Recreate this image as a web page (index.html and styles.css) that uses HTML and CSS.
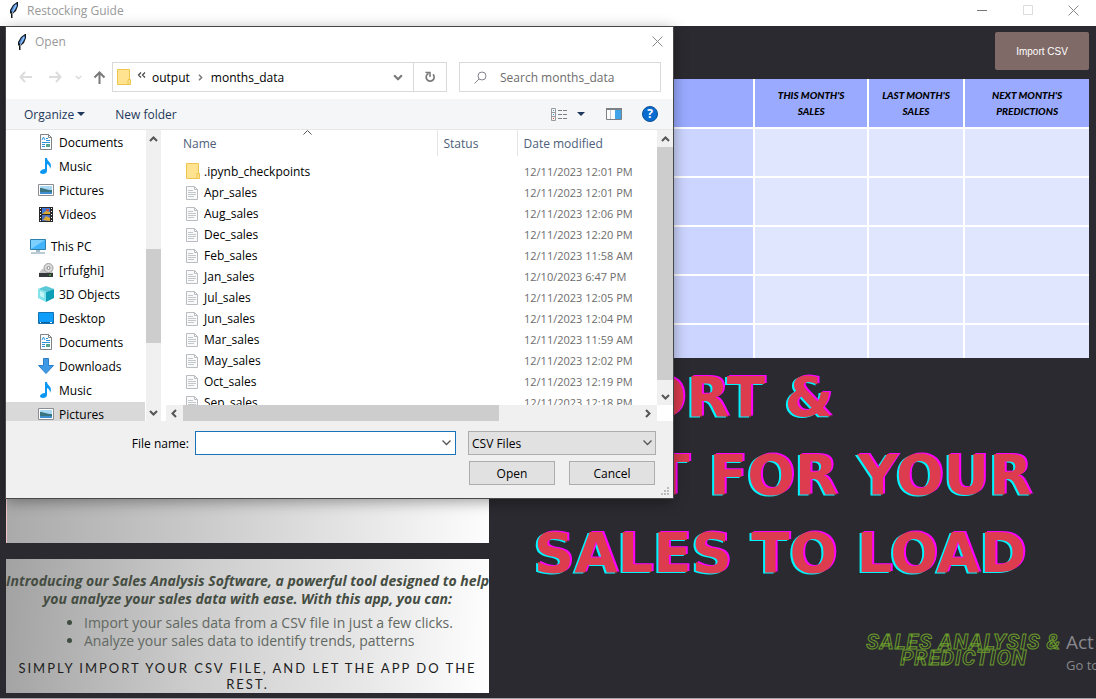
FILE: index.html
```html
<!DOCTYPE html>
<html lang="en">
<head>
<meta charset="utf-8">
<title>Restocking Guide</title>
<link rel="stylesheet" href="styles.css">
</head>
<body>
<svg class="defs" aria-hidden="true">
  <symbol id="feather" viewBox="0 0 10 16"><path d="M8 0 4 3 1 8l0 3 1 1 0 4 1.500 0 0-4L7 9l2-5V0z" fill="#16191f"/><path d="M7.500 1.500 4.500 4 2 9l1.500 1L6 8l2-4z" fill="#4c8fe0"/><path d="M7 3 3 12" stroke="#c9e2ff" stroke-width=".8"/></symbol>
  <symbol id="folder" viewBox="0 0 14 17"><path d="M.500.500h12v15H.500z" fill="#ffe391" stroke="#ecc44e"/><path d="M11 10.500h2.500v5H11z" fill="#ffe391" stroke="#ecc44e"/></symbol>
  <symbol id="file" viewBox="0 0 12 14"><path d="M.500.500h8l3 3v10H.500z" fill="#fafafa" stroke="#b9bcc0"/><path d="M8.500.500v3h3" fill="none" stroke="#b9bcc0"/><path d="M2 4.500h5M2 6.500h8M2 8.500h8M2 10.500h6" stroke="#c2c7cc"/></symbol>
  <symbol id="chev-up" viewBox="0 0 9 6"><path d="M1 5 4.500 1.500 8 5" fill="none" stroke="currentColor" stroke-width="2"/></symbol>
  <symbol id="chev-down" viewBox="0 0 9 6"><path d="M1 1 4.500 4.500 8 1" fill="none" stroke="currentColor" stroke-width="2"/></symbol>
  <symbol id="chev-thin" viewBox="0 0 9 6"><path d="M.500.500 4.500 4.500 8.500.500" fill="none" stroke="currentColor" stroke-width="1.300"/></symbol>
  <symbol id="chev-left" viewBox="0 0 6 9"><path d="M5 1 1.500 4.500 5 8" fill="none" stroke="currentColor" stroke-width="2"/></symbol>
  <symbol id="chev-right" viewBox="0 0 6 9"><path d="M1 1 4.500 4.500 1 8" fill="none" stroke="currentColor" stroke-width="2"/></symbol>
  <symbol id="caret" viewBox="0 0 8 4"><path d="M0 0h8L4 4z" fill="#1e395b"/></symbol>
  <symbol id="close" viewBox="0 0 11 11"><path d="m.500.500 10 10m0-10-10 10" stroke="currentColor"/></symbol>
  <symbol id="docs" viewBox="0 0 16 16"><path d="M2.500.500h8l3 3v12h-11z" fill="#fff" stroke="#7e8388"/><path d="M10.500.500v3h3" fill="none" stroke="#7e8388"/><path d="m4 6 1.500-3L7 6M8 4.500h2M8 6.500h4M4 8.500h8M4 10.500h3M4 12.500h3" fill="none" stroke="#2c93d8"/><path d="M8 10h4v3H8z" fill="#58a58c"/></symbol>
  <symbol id="music" viewBox="0 0 16 16"><path d="M7 0h2c0 3 4 4 4 8l-1 3c0-3-1-4-3-5v7c0 2-2 3-4 3s-3-1-3-2 2-3 5-3z" fill="#0c97f2"/></symbol>
  <symbol id="pictures" viewBox="0 0 16 12"><path d="M.500.500h15v11H.500z" fill="#fff" stroke="#8a8e92"/><path d="M2 2h12v8H2z" fill="#a8d8f4"/><path d="M2 4c4 0 6 2 12 2v2H2z" fill="#39747f"/><path d="M2 8h12v2H2z" fill="#3f8fd0"/></symbol>
  <symbol id="videos" viewBox="0 0 14 15"><path d="M0 0h14v15H0z" fill="#26282b"/><path d="M3 1h8v6H3z" fill="#3f78d8"/><path d="M3 8h8v6H3z" fill="#4a6fc0"/><path d="m3 7 4-3 4 1v2zM4 13l3-4 4 2v3z" fill="#dda832"/><path d="M7 2h3v2H7z" fill="#c85738"/><path d="M1.500 1v14M12.500 1v14" stroke="#fff" stroke-dasharray="1 2"/></symbol>
  <symbol id="pc" viewBox="0 0 16 15"><path d="M.500.500h15v10H.500z" fill="#40b3fa" stroke="#2d81ae"/><path d="M1 10V1h14z" fill="#7bd0ff"/><path d="M6 11h4v2H6z" fill="#a6bccb"/><path d="M1 14h14" stroke="#7996a8"/></symbol>
  <symbol id="drive" viewBox="0 0 16 15"><path d="m1 10 3-4h9l2 4z" fill="#c8c8c8"/><circle cx="10.500" cy="5" r="4.500" fill="#dcdcdc" stroke="#9d9d9d"/><circle cx="10.500" cy="5" r="1.500" fill="#fff" stroke="#888"/><path d="M1 10h14v4H1z" fill="#35393b"/><path d="M11 12h2" stroke="#48e04b"/></symbol>
  <symbol id="cube" viewBox="0 0 16 16"><path d="m0 3 8-3 8 3-8 3z" fill="#5cc9d8"/><path d="m0 3 8 3v10l-8-4z" fill="#83e3ea"/><path d="m16 3-8 3v10l8-4z" fill="#0e9fb8"/><path d="m2 5 4 2v5l-4-2z" fill="#c2f6f8"/></symbol>
  <symbol id="desktop" viewBox="0 0 16 12"><path d="M.500.500h15v11H.500z" fill="#0d9dfa" stroke="#1371b4"/><path d="M1 10.500h14" stroke="#0b5e9c"/><path d="M2 10.500h1m9 0h2" stroke="#fff"/></symbol>
  <symbol id="download" viewBox="0 0 16 16"><path d="M5.500.500h5v7h5L8 15.500.500 7.500h5z" fill="#3e9ae6" stroke="#2b7ec6"/></symbol>
</svg>

<header class="titlebar">
  <svg class="feather"><use href="#feather"/></svg>
  <h1 class="titlebar-name">Restocking Guide</h1>
  <button class="win-btn" aria-label="Minimize"><svg width="11" height="11"><path d="M0 5.500h10" stroke="#777"/></svg></button>
  <button class="win-btn" aria-label="Maximize"><svg width="11" height="11"><path d="M.500.500h9v9h-9z" fill="none" stroke="#ddd"/></svg></button>
  <button class="win-btn win-close" aria-label="Close"><svg width="11" height="11"><use href="#close"/></svg></button>
</header>

<main class="app">
  <section class="left">
    <div class="photo"></div>
    <div class="intro">
      <p class="intro-lead">Introducing our Sales Analysis Software, a powerful tool designed to help<br>you analyze your sales data with ease. With this app, you can:</p>
      <ul class="intro-list">
        <li>Import your sales data from a CSV file in just a few clicks.</li>
        <li>Analyze your sales data to identify trends, patterns</li>
      </ul>
      <p class="intro-cta">SIMPLY IMPORT YOUR CSV FILE, AND LET THE APP DO THE REST.</p>
    </div>
  </section>

  <section class="right">
    <button class="import">Import CSV</button>
    <table class="sales">
      <colgroup><col class="c-item"><col class="c-this"><col class="c-last"><col class="c-next"></colgroup>
      <thead><tr><td></td><th>THIS MONTH'S<br>SALES</th><th>LAST MONTH'S<br>SALES</th><th>NEXT MONTH'S<br>PREDICTIONS</th></tr></thead>
      <tbody>
        <tr><td></td><td></td><td></td><td></td></tr>
        <tr><td></td><td></td><td></td><td></td></tr>
        <tr><td></td><td></td><td></td><td></td></tr>
        <tr><td></td><td></td><td></td><td></td></tr>
        <tr class="last"><td></td><td></td><td></td><td></td></tr>
      </tbody>
    </table>
    <h2 class="loading"><span class="loading-first">IMPORT &amp;</span><span>WAIT FOR YOUR</span><span>SALES TO LOAD</span></h2>
    <p class="brand">SALES ANALYSIS &amp;<br>PREDICTION</p>
  </section>
  <div class="watermark"><p class="wm-title">Act</p><p class="wm-text">Go to</p></div>
</main>

<section class="dialog" role="dialog" aria-labelledby="dlg-title">
  <header class="dlg-title">
    <svg class="feather"><use href="#feather"/></svg>
    <h2 id="dlg-title" class="titlebar-name">Open</h2>
    <button class="plain dlg-close" aria-label="Close"><svg width="11" height="11"><use href="#close"/></svg></button>
  </header>

  <nav class="nav">
    <div class="nav-arrows">
      <button class="plain faint" aria-label="Back"><svg width="13" height="12"><path d="M6 1 1.500 6 6 11M2 6h11" fill="none" stroke="currentColor" stroke-width="2"/></svg></button>
      <button class="plain faint" aria-label="Forward"><svg width="13" height="12"><path d="M7 1l4.500 5L7 11M11 6H0" fill="none" stroke="currentColor" stroke-width="2"/></svg></button>
      <button class="plain faint" aria-label="Recent locations"><svg width="7" height="5" viewBox="0 0 9 6"><use href="#chev-down"/></svg></button>
      <button class="plain" aria-label="Up"><svg width="13" height="13"><path d="M1.500 6.500l5-5 5 5M6.500 2v11" fill="none" stroke="currentColor" stroke-width="2"/></svg></button>
    </div>
    <div class="address">
      <svg width="14" height="17"><use href="#folder"/></svg>
      <svg class="laquo" width="9" height="6"><path d="M4 .500 1.500 3 4 5.500M8 .500 5.500 3 8 5.500" fill="none" stroke="#444" stroke-width="1.200"/></svg>
      <a href="#output">output</a>
      <svg class="crumb" width="5" height="7" viewBox="0 0 6 9"><use href="#chev-right"/></svg>
      <a href="#months">months_data</a>
      <button class="plain addr-drop" aria-label="Previous locations"><svg width="10" height="7" viewBox="0 0 9 6"><use href="#chev-down"/></svg></button>
      <button class="plain refresh" aria-label="Refresh"><svg width="12" height="12"><path d="M4.500 2.500a4 4 0 1 0 4.500.800" fill="none" stroke="currentColor" stroke-width="1.700"/><path d="M1.500 1.500h4.500v4.500" fill="none" stroke="currentColor" stroke-width="1.500"/></svg></button>
    </div>
    <label class="search">
      <svg width="13" height="13"><circle cx="8" cy="5" r="4" fill="none" stroke="#84848c"/><path d="M5 8 .500 12.500" stroke="#84848c"/></svg>
      <input type="search" placeholder="Search months_data" aria-label="Search months_data">
    </label>
  </nav>

  <div class="toolbar">
    <button class="plain">Organize <svg width="8" height="4"><use href="#caret"/></svg></button>
    <button class="plain new-folder">New folder</button>
    <button class="plain view" aria-label="Change view"><svg width="17" height="13"><path d="M.500.500h4v12h-4zM.500 4.500h4M.500 8.500h4" fill="none" stroke="#979ba0"/><path d="M7 2.500h4m1 0h4M7 6.500h4m1 0h4M7 10.500h4m1 0h4" stroke="#7c8085"/><path d="M2 2.500h1M2 6.500h1" stroke="#459bd8"/><path d="M2 10.500h1" stroke="#d6422d"/></svg><svg width="8" height="4"><use href="#caret"/></svg></button>
    <button class="plain" aria-label="Preview pane"><svg width="16" height="12"><path d="M.500.500h15v11H.500z" fill="#fff" stroke="#7c8187"/><path d="M0 1h16" stroke="#7c8187" stroke-width="2"/><path d="M4.500 2v9" stroke="#c5c8cb"/><path d="M9 2h6v9H9z" fill="#41a3e8"/></svg></button>
    <button class="help" aria-label="Help">?</button>
  </div>

  <div class="browser">
    <div class="tree">
      <ul class="tree-list">
        <li><svg width="16" height="16"><use href="#docs"/></svg>Documents</li>
        <li><svg width="16" height="16"><use href="#music"/></svg>Music</li>
        <li><svg width="16" height="12"><use href="#pictures"/></svg>Pictures</li>
        <li><svg width="16" height="15"><use href="#videos"/></svg>Videos</li>
        <li class="root"><svg width="16" height="15"><use href="#pc"/></svg>This PC</li>
        <li><svg width="16" height="15"><use href="#drive"/></svg>[rfufghi]</li>
        <li><svg width="16" height="16"><use href="#cube"/></svg>3D Objects</li>
        <li><svg width="16" height="12"><use href="#desktop"/></svg>Desktop</li>
        <li><svg width="16" height="16"><use href="#docs"/></svg>Documents</li>
        <li><svg width="16" height="16"><use href="#download"/></svg>Downloads</li>
        <li><svg width="16" height="16"><use href="#music"/></svg>Music</li>
        <li class="selected"><svg width="16" height="12"><use href="#pictures"/></svg>Pictures</li>
      </ul>
    </div>
    <div class="vscroll tree-scroll"><svg width="9" height="6"><use href="#chev-up"/></svg><i class="thumb"></i><svg width="9" height="6"><use href="#chev-down"/></svg></div>

    <div class="files">
      <div class="files-view">
        <table class="file-table">
          <colgroup><col class="f-name"><col class="f-status"><col></colgroup>
          <thead><tr><th>Name<svg class="sort" width="9" height="5"><path d="M.500 4.500l4-4 4 4" fill="none" stroke="#555"/></svg></th><th>Status</th><th>Date modified</th></tr></thead>
          <tbody>
            <tr><td><span><svg width="14" height="17"><use href="#folder"/></svg>.ipynb_checkpoints</span></td><td></td><td>12/11/2023 12:01 PM</td></tr>
            <tr><td><span><svg width="12" height="14"><use href="#file"/></svg>Apr_sales</span></td><td></td><td>12/11/2023 12:01 PM</td></tr>
            <tr><td><span><svg width="12" height="14"><use href="#file"/></svg>Aug_sales</span></td><td></td><td>12/11/2023 12:06 PM</td></tr>
            <tr><td><span><svg width="12" height="14"><use href="#file"/></svg>Dec_sales</span></td><td></td><td>12/11/2023 12:20 PM</td></tr>
            <tr><td><span><svg width="12" height="14"><use href="#file"/></svg>Feb_sales</span></td><td></td><td>12/11/2023 11:58 AM</td></tr>
            <tr><td><span><svg width="12" height="14"><use href="#file"/></svg>Jan_sales</span></td><td></td><td>12/10/2023 6:47 PM</td></tr>
            <tr><td><span><svg width="12" height="14"><use href="#file"/></svg>Jul_sales</span></td><td></td><td>12/11/2023 12:05 PM</td></tr>
            <tr><td><span><svg width="12" height="14"><use href="#file"/></svg>Jun_sales</span></td><td></td><td>12/11/2023 12:04 PM</td></tr>
            <tr><td><span><svg width="12" height="14"><use href="#file"/></svg>Mar_sales</span></td><td></td><td>12/11/2023 11:59 AM</td></tr>
            <tr><td><span><svg width="12" height="14"><use href="#file"/></svg>May_sales</span></td><td></td><td>12/11/2023 12:02 PM</td></tr>
            <tr><td><span><svg width="12" height="14"><use href="#file"/></svg>Oct_sales</span></td><td></td><td>12/11/2023 12:19 PM</td></tr>
            <tr><td><span><svg width="12" height="14"><use href="#file"/></svg>Sep_sales</span></td><td></td><td>12/11/2023 12:18 PM</td></tr>
          </tbody>
        </table>
      </div>
      <div class="vscroll files-scroll"><svg width="9" height="6"><use href="#chev-up"/></svg><i class="thumb"></i><svg width="9" height="6"><use href="#chev-down"/></svg></div>
      <div class="hscroll"><svg width="6" height="9"><use href="#chev-left"/></svg><i class="thumb"></i><svg width="6" height="9"><use href="#chev-right"/></svg></div>
    </div>
  </div>

  <form class="dlg-footer">
    <label for="filename">File name:</label>
    <div class="combo">
      <input id="filename" type="text">
      <button type="button" class="plain" aria-label="Recent file names"><svg width="9" height="6"><use href="#chev-thin"/></svg></button>
    </div>
    <div class="filter">
      <select aria-label="File type"><option>CSV Files</option></select>
      <svg width="9" height="6"><use href="#chev-thin"/></svg>
    </div>
    <div class="actions">
      <button type="button" class="push">Open</button>
      <button type="button" class="push">Cancel</button>
    </div>
    <svg class="grip" width="9" height="9"><path d="M6 1h2M3 4h2m1 0h2M0 7h2m1 0h2m1 0h2" stroke="#bcbcbc" stroke-width="2"/></svg>
  </form>
</section>
</body>
</html>
```
FILE: styles.css
```css
* { box-sizing: border-box; }

body {
  margin: 0;
  min-height: 100vh;
  display: flex;
  flex-direction: column;
  position: relative;
  overflow: hidden;
  background: #2b2a30;
  color: #000;
  font-family: "Open Sans", "Noto Sans", sans-serif;
  font-size: 12px;
}

h1, h2, p, ul { margin: 0; padding: 0; }
ul { list-style: none; }
button, input, select { font: inherit; color: inherit; }
svg { flex: none; display: block; }
.defs { position: absolute; width: 0; height: 0; }

.plain {
  border: 0;
  padding: 0;
  background: none;
  display: flex;
  align-items: center;
  justify-content: center;
}

/* main window */
.titlebar {
  height: 26px;
  padding: 0 0 6px 9px;
  display: flex;
  align-items: center;
  background: #fff;
}
.feather { width: 10px; height: 16px; margin-right: 8px; }
.titlebar-name { flex: 1; font-size: 12px; font-weight: 400; color: #999; }
.win-btn {
  width: 46px;
  height: 20px;
  border: 0;
  padding: 0;
  background: none;
  display: flex;
  align-items: center;
  justify-content: center;
}
.win-close { width: 45px; color: #888; }

.app {
  flex: 1;
  position: relative;
  display: grid;
  grid-template-columns: 483fr 568fr;
  gap: 32px;
  padding: 6px 7px 5px 6px;
  border-bottom: 1px solid #a5a4a8;
}

.left { display: flex; flex-direction: column; gap: 16px; padding-top: 47px; min-width: 0; }
.photo {
  flex: 1;
  border-left: 1px solid #f0c4c4;
  background: linear-gradient(90deg, #aaa, #c6c6c6 35%, #e2e2e2 68%, #fdfdfd);
}
.intro {
  padding: 13px 0 0;
  height: 134px;
  background: linear-gradient(95deg, #a2a2a2, #cdcdcd 40%, #e8e8e8 75%, #fff);
}
.intro-lead {
  font-size: 14px;
  line-height: 18px;
  font-weight: 700;
  font-style: italic;
  color: #454d42;
  text-align: center;
  white-space: nowrap;
}
.intro-list {
  padding: 6px 0 0 78px;
  list-style: disc;
  font-size: 14px;
  line-height: 18px;
  color: #626862;
}
.intro-list li::marker { color: #3f4d40; }
.intro-cta {
  padding: 10px 8px 0;
  font-family: Lato, sans-serif;
  font-size: 13px;
  line-height: 16px;
  letter-spacing: 2px;
  color: #1d1d1d;
  text-align: center;
}

.right { display: flex; flex-direction: column; }
.import {
  align-self: flex-end;
  width: 94px;
  height: 38px;
  margin-bottom: 9px;
  border: 0;
  border-radius: 2px;
  background: #806a68;
  color: #fff;
  font-family: "Liberation Sans", Arial, sans-serif;
  font-size: 10px;
}

.sales { width: 100%; table-layout: fixed; border-collapse: collapse; }
.sales td, .sales th { padding: 0; height: 49px; background: #e1e6ff; border: 2px solid #fff; }
.sales thead td, .sales th {
  background: #99aaff;
  border-top: 0;
  font-family: Lato, sans-serif;
  font-size: 10px;
  line-height: 16px;
  font-weight: 900;
  font-style: italic;
}
.sales tbody td:first-child { background: #ccd5ff; }
.sales td:last-child, .sales th:last-child { border-right: 0; }
.sales .last td { height: 34px; border-bottom: 0; }
.c-item { width: 41%; }
.c-this { width: 20%; }
.c-last { width: 17%; }
.c-next { width: 22%; }

.loading {
  display: flex;
  flex-direction: column;
  align-items: center;
  padding-right: 50px;
  font-family: "DejaVu Sans", sans-serif;
  font-size: 56px;
  line-height: 78px;
  font-weight: 700;
  color: #dc3c4e;
  text-shadow: 2px -1px #ff00ff, -2px 1px #00f4ff;
  white-space: nowrap;
}
.loading-first { align-self: flex-start; }

.brand {
  align-self: flex-end;
  margin: auto 28px 27px 0;
  font-family: Roboto, sans-serif;
  font-size: 21px;
  line-height: 16px;
  font-weight: 700;
  font-style: italic;
  text-align: center;
  letter-spacing: 1px;
  color: transparent;
  -webkit-text-stroke: 1px #6a9a2c;
}
.watermark {
  position: absolute;
  right: 0;
  bottom: 23px;
  width: 30px;
  overflow: hidden;
  white-space: nowrap;
  color: #88878c;
}
.wm-title { font-size: 19px; line-height: 26px; }
.wm-text { font-size: 13px; line-height: 20px; }

/* file dialog, floating over the window */
.dialog {
  position: absolute;
  left: 6px;
  top: 27px;
  width: 667px;
  background: #fff;
  font-size: 12px;
  box-shadow: 0 0 0 1px #48484a, 0 3px 14px rgba(0, 0, 0, .4);
}
.dlg-title { height: 29px; padding: 0 10px 0 11px; display: flex; align-items: center; }
.dlg-close { color: #888; }

.nav { display: flex; padding: 6px 12px 7px 4px; color: #7a7a7a; }
.nav-arrows { display: grid; grid-template-columns: 30px 30px 16px 26px; }
.faint { color: #dcdcdc; }
.address {
  flex: 1;
  height: 30px;
  display: flex;
  align-items: center;
  border: 1px solid #d9d9d9;
  padding-left: 4px;
}
.address a { color: #000; text-decoration: none; }
.laquo { margin: 0 6px 4px 6px; }
.crumb { margin: 0 8px; }
.addr-drop { margin-left: auto; width: 30px; height: 28px; }
.refresh { width: 33px; height: 28px; border-left: 1px solid #d9d9d9; }
.search {
  width: 202px;
  margin-left: 12px;
  height: 30px;
  display: flex;
  align-items: center;
  gap: 13px;
  border: 1px solid #d9d9d9;
  padding-left: 14px;
}
.search input { min-width: 0; flex: 1; border: 0; padding: 0; outline: 0; background: none; }
.search input::placeholder { color: #6d6d6d; opacity: 1; }

.toolbar {
  height: 31px;
  display: flex;
  align-items: center;
  padding: 0 15px 0 18px;
  background: #f5f6f7;
  border-bottom: 1px solid #e6e7e8;
  color: #1e395b;
}
.toolbar .plain { gap: 3px; }
.toolbar .new-folder { margin: 0 auto 0 30px; }
.toolbar .view { gap: 9px; margin-right: 21px; }
.help {
  width: 16px;
  height: 16px;
  margin-left: 20px;
  padding: 0;
  border: 1px solid #0a4f96;
  border-radius: 50%;
  background: #0a6cd0;
  color: #fff;
  font-weight: 700;
  line-height: 14px;
}

.browser { display: grid; grid-template-columns: 139px 16px 1fr; height: 291px; }
.tree { overflow: hidden; }
.tree-list li { height: 24px; padding-left: 32px; display: flex; align-items: center; gap: 5px; }
.tree-list .root { margin-top: 8px; padding-left: 24px; }
.tree-list .selected { background: #d9d9d9; }

.vscroll, .hscroll { display: flex; align-items: center; background: #f0f0f0; color: #555; }
.vscroll { flex-direction: column; padding: 6px 0 5px; }
.hscroll { padding: 0 6px 0 5px; }
.thumb { background: #cdcdcd; }
.vscroll .thumb { width: 100%; }
.tree-scroll { margin-left: 1px; }
.tree-scroll .thumb { height: 94px; margin: 107px 0 auto; }
.files-scroll .thumb { height: 233px; margin: 5px 0 auto; }
.hscroll .thumb { width: 316px; height: 100%; margin: 0 auto 0 6px; }

.files {
  margin-left: 5px;
  min-height: 0;
  display: grid;
  grid-template-columns: 1fr 16px;
  grid-template-rows: 275px 16px;
}
.files-view { overflow: hidden; }
.file-table { width: 100%; table-layout: fixed; border-collapse: collapse; }
.f-name { width: 271px; }
.f-status { width: 80px; }
.file-table th {
  height: 26px;
  padding: 0 0 0 6px;
  font-weight: 400;
  text-align: left;
  color: #4c607a;
  border-left: 1px solid #e5e5e5;
  position: relative;
}
.file-table th:first-child { padding-left: 17px; border-left: 0; }
.sort { position: absolute; left: 137px; top: 0; }
.file-table td { height: 21px; padding: 0 0 0 7px; color: #6d6d6d; white-space: nowrap; }
.file-table td:first-child { padding-left: 20px; }
.file-table td:last-child { font-size: 11px; }
.file-table td span { display: grid; grid-template-columns: 18px auto; align-items: center; color: #000; }
.file-table tbody::before { content: ""; display: block; height: 5px; }

.dlg-footer {
  position: relative;
  display: grid;
  grid-template-columns: 183px 261px 188px;
  column-gap: 6px;
  row-gap: 6px;
  padding: 10px 0 13px;
  background: #f0f0f0;
}
.dlg-footer label { text-align: right; align-self: center; }
.combo { display: flex; height: 24px; border: 1px solid #1a72bb; background: #fff; color: #555; }
.combo input { flex: 1; min-width: 0; border: 0; padding: 0 4px; outline: 0; background: none; color: #000; }
.combo .plain { width: 17px; }
.filter { position: relative; margin-left: 6px; width: 188px; color: #555; }
.filter select {
  appearance: none;
  width: 100%;
  height: 24px;
  padding: 0 3px;
  border: 1px solid #adadad;
  border-radius: 0;
  background: #e1e1e1;
  color: #000;
}
.filter svg { position: absolute; right: 4px; top: 9px; pointer-events: none; }
.actions { grid-column: 3; display: flex; gap: 14px; margin-left: 7px; width: 186px; }
.push { flex: 1; height: 24px; padding: 0; border: 1px solid #adadad; background: #e1e1e1; }
.grip { position: absolute; right: 3px; bottom: 2px; }
```
